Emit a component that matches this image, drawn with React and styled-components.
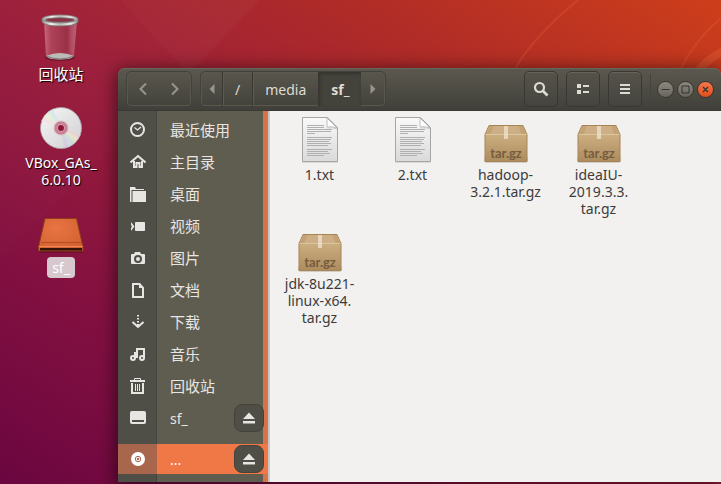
import styled, { createGlobalStyle } from "styled-components";

const GlobalStyle = createGlobalStyle`
  * {
    box-sizing: border-box;
    margin: 0;
    padding: 0;
  }

  body {
    background: #670540;
    font-family: "Noto Sans", "Noto Sans CJK SC", sans-serif;
    font-size: 14px;
    line-height: 17px;
  }

  button {
    font: inherit;
    color: inherit;
    background: none;
    border: none;
  }

  svg {
    display: block;
    flex: none;
  }
`;

const Desktop = styled.div`
  min-height: 100vh;
  display: flex;
  position: relative;
  overflow: hidden;
`;

const WallpaperSvg = styled.svg`
  position: absolute;
  inset: 0;
  width: 100%;
  height: 100%;
`;

const Shortcuts = styled.ul`
  position: relative;
  flex: none;
  width: 118px;
  padding: 14px 0 0 4px;
  list-style: none;
  display: flex;
  flex-direction: column;
  gap: 17px;
`;

const Shortcut = styled.li`
  display: flex;
  flex-direction: column;
  align-items: center;
  gap: 2px;
`;

const ShortcutLabel = styled.span`
  padding: 2px 5px;
  border-radius: 4px;
  text-align: center;
  white-space: pre-line;
  color: white;
  font-size: ${(props) => (props.$cjk ? "15px" : "14px")};
  background: ${(props) => (props.$selected ? "#d6c8cd" : "transparent")};
  text-shadow: ${(props) => (props.$selected ? "none" : "1px 1px 1px #000")};
`;

const Window = styled.main`
  position: relative;
  flex: 1;
  min-width: 0;
  margin: 68px 0 2px;
  display: flex;
  flex-direction: column;
  border-radius: 7px 7px 0 0;
  box-shadow: 0 3px 18px 2px rgba(0, 0, 0, 0.55);
`;

const HeaderBar = styled.header`
  height: 43px;
  padding: 0 7px 0 8px;
  display: flex;
  align-items: center;
  gap: 8px;
  color: #dfdbd2;
  background: linear-gradient(#5b594f, #403f3a);
  border-bottom: 1px solid #3a3934;
  border-radius: 7px 7px 0 0;
  box-shadow: inset 0 1px #68665b;
`;

const ButtonGroup = styled.nav`
  height: 36px;
  display: flex;
  border: 1px solid #42413b;
  border-radius: 5px;
  overflow: hidden;
  box-shadow: inset 0 0 0 1px #59574e;
`;

const NavButton = styled.button`
  width: 32px;
  display: grid;
  place-items: center;
  color: #98958c;
`;

const PathArrow = styled(NavButton)`
  width: ${(props) => (props.$wide ? "24px" : "21px")};
`;

const Crumb = styled.button`
  padding: 0 12px;
  border-left: 1px solid #393833;
  box-shadow: inset 1px 1px #5d5b51;
  font-size: 14px;

  &[aria-current] {
    font-weight: bold;
    background: #43423b;
    box-shadow: inset 1px 2px 3px #35342f;
  }
`;

const Tools = styled.div`
  margin-left: auto;
  display: flex;
  gap: 8px;
`;

const ToolButton = styled.button`
  width: 34px;
  height: 36px;
  display: grid;
  place-items: center;
  border: 1px solid #383731;
  border-radius: 5px;
  background: linear-gradient(#55534a, #454440);
  box-shadow: inset 0 1px #65635a;
`;

const WindowControls = styled.div`
  padding-left: 6px;
  border-left: 1px solid #44433e;
  height: 30px;
  display: flex;
  align-items: center;
  gap: 3px;
`;

const ControlButton = styled.button`
  width: 17px;
  height: 17px;
  display: grid;
  place-items: center;
  border: 1px solid #35342f;
  border-radius: 50%;
  color: #35342f;
  background: ${(props) =>
    props.$close
      ? "linear-gradient(#f4774c, #e04e1c)"
      : "linear-gradient(#8b897f, #67655d)"};
`;

const Body = styled.div`
  flex: 1;
  display: flex;
  background: #f2f1ef;
`;

const Sidebar = styled.aside`
  flex: none;
  width: 152px;
  border-right: 2px solid #cbc9c6;
  background: linear-gradient(
    to right,
    #504f47 38px,
    #45443e 38px 39px,
    #5f5d50 39px 145px,
    #d5734a 145px
  );
`;

const Places = styled.ul`
  padding: 3px 0 8px;
  list-style: none;
`;

const Place = styled.li`
  height: ${(props) => (props.$active ? "30px" : "32px")};
  margin-top: ${(props) => (props.$active ? "10px" : "0")};
  padding: 0 4px 0 12px;
  display: flex;
  align-items: center;
  justify-content: space-between;
  color: ${(props) => (props.$active ? "#fff" : "#e8e6e3")};
  background: ${(props) =>
    props.$active
      ? "linear-gradient(to right, #a8664c 39px, #f07746 39px)"
      : "none"};
`;

const PlaceLink = styled.a`
  display: flex;
  align-items: center;
  gap: 24px;
  color: inherit;
  text-decoration: none;
  font-size: ${(props) => (props.$cjk ? "15px" : "14px")};
`;

const EjectButton = styled.button`
  width: 30px;
  height: 28px;
  display: grid;
  place-items: center;
  border: 1px solid #43423b;
  border-radius: 8px;
  background: #504f47;
`;

const Files = styled.ul`
  flex: 1;
  padding: 5px 0 0 3px;
  list-style: none;
  display: grid;
  grid-template-columns: repeat(auto-fill, 93px);
  align-content: start;
  gap: 8px 0;
`;

const File = styled.li`
  display: flex;
  flex-direction: column;
  align-items: center;
  gap: 2px;
  color: #3c3c3c;
`;

const FileName = styled.span`
  text-align: center;
  white-space: pre-line;
`;

const Wallpaper = () => (
  <WallpaperSvg
    viewBox="0 0 721 484"
    preserveAspectRatio="xMidYMid slice"
    aria-hidden="true"
  >
    <defs>
      <linearGradient
        id="wall"
        gradientUnits="userSpaceOnUse"
        x1="0"
        y1="484"
        x2="427"
        y2="-187"
      >
        <stop offset="0" stopColor="#6b0640" />
        <stop offset="0.26" stopColor="#841140" />
        <stop offset="0.5" stopColor="#9b1e3b" />
        <stop offset="0.75" stopColor="#b02c27" />
        <stop offset="1" stopColor="#cd3e1a" />
      </linearGradient>
    </defs>
    <rect width="721" height="484" fill="url(#wall)" />
    <path d="M0 260L260 0H0z" fill="#fff" opacity="0.012" />
    <path d="M120 0L190 75L260 0z" fill="#fff" opacity="0.02" />
    <g fill="none" stroke="#ff8a50">
      <path d="M578 0Q535 35 514 70" strokeWidth="2" opacity="0.16" />
      <path d="M721 18Q695 40 680 70" strokeWidth="2" opacity="0.16" />
      <path d="M725 50Q705 60 694 76" strokeWidth="8" opacity="0.2" />
    </g>
  </WallpaperSvg>
);

const BinIcon = () => (
  <svg width="48" height="48" viewBox="0 0 48 48">
    <defs>
      <linearGradient id="glass">
        <stop offset="0" stopColor="#c86a80" />
        <stop offset="0.2" stopColor="#ae4359" />
        <stop offset="0.7" stopColor="#9a3045" />
        <stop offset="0.82" stopColor="#b04a60" />
        <stop offset="1" stopColor="#bb6579" />
      </linearGradient>
      <linearGradient id="rim">
        <stop offset="0" stopColor="#8e8d89" />
        <stop offset="0.25" stopColor="#f4f4f2" />
        <stop offset="0.5" stopColor="#b9b8b4" />
        <stop offset="0.8" stopColor="#eeeeec" />
        <stop offset="1" stopColor="#8e8d89" />
      </linearGradient>
    </defs>
    <ellipse cx="23" cy="43.5" rx="15" ry="3.5" fill="#400818" opacity="0.45" />
    <path d="M7 7L9 42Q23 48 37 42L40 7z" fill="url(#glass)" />
    <path d="M9 42Q23 36 37 42Q35 45.5 23 45.5T9 42z" fill="#bcbab7" />
    <path d="M9 42Q23 48 37 42" fill="none" stroke="#777" />
    <path d="M5 5v3q3 4 18 4t18-4V5z" fill="url(#rim)" stroke="#74736e" strokeWidth="0.8" />
    <ellipse cx="23" cy="5" rx="18" ry="4" fill="url(#rim)" stroke="#8d8c87" strokeWidth="0.8" />
    <ellipse cx="23" cy="6" rx="14.5" ry="2.3" fill="#883246" stroke="#777" strokeWidth="0.8" />
  </svg>
);

const DiscIcon = () => (
  <svg width="48" height="48" viewBox="0 0 48 48">
    <defs>
      <linearGradient id="disc" x1="0" y1="0" x2="1" y2="1">
        <stop offset="0" stopColor="#f6f6f6" />
        <stop offset="1" stopColor="#cfcfd2" />
      </linearGradient>
    </defs>
    <circle cx="24" cy="26" r="20.5" fill="url(#disc)" stroke="#a9a3a8" strokeWidth="0.8" />
    <g opacity="0.5">
      <path d="M24 26L4 19L8 13z" fill="#f5dde3" />
      <path d="M24 26L7 14L12 9z" fill="#e3f2c6" />
      <path d="M24 26L11 9.5L16 7z" fill="#c2e7ed" />
      <path d="M24 26L44 32L41 37z" fill="#f3cfd8" />
      <path d="M24 26L41.5 36L37 41z" fill="#f4edbb" />
      <path d="M24 26L37.5 41L32 45z" fill="#bfe5e0" />
      <path d="M24 26L32 45L27 46z" fill="#d6c3e9" />
    </g>
    <circle cx="24" cy="26" r="7" fill="#ca8093" stroke="#d8b9c2" />
    <circle cx="24" cy="26" r="3.6" fill="#8d173a" stroke="#dba5b3" />
  </svg>
);

const DriveIcon = () => (
  <svg width="48" height="48" viewBox="0 0 48 48">
    <defs>
      <radialGradient id="drive" cx="0.4" cy="0.3" r="0.8">
        <stop offset="0" stopColor="#e77442" />
        <stop offset="1" stopColor="#d2602f" />
      </radialGradient>
    </defs>
    <path d="M2 43h44v2.5H2z" fill="#3a0519" opacity="0.5" />
    <path d="M8 11.5h31.5l6.5 28.5v4h-44.500v-4z" fill="url(#drive)" stroke="#8e3d18" />
    <path d="M4 35.5h40" stroke="#b44e22" />
    <path d="M2 39.5h44" stroke="#f08a58" />
    <path d="M3 41h42v2.5h-42z" fill="#341307" />
  </svg>
);

const TextFileIcon = () => (
  <svg width="48" height="48" viewBox="0 0 48 48">
    <defs>
      <linearGradient id="paper" x1="0" y1="0" x2="0" y2="1">
        <stop offset="0" stopColor="#f9f9f9" />
        <stop offset="1" stopColor="#dadada" />
      </linearGradient>
    </defs>
    <path d="M6 46.5h36" stroke="#dad9d7" />
    <path d="M6.500 1.500h25l10 10v34h-35z" fill="url(#paper)" stroke="#a6a6a6" />
    <path d="M31 2v9q5-1 10 1z" fill="#fff" stroke="#b0b0b0" strokeWidth="0.8" />
    <path d="M31 12q5-1 10 1" fill="none" stroke="#ccc" />
    <g stroke="#b0b0b0">
      <path d="M11 9.5h17M11 11.5h17M11 13.5h25M11 15.5h24M11 17.5h8" />
      <path d="M11 21.5h25M11 23.5h24M11 25.5h22M11 27.5h24M11 29.5h21" />
      <path d="M11 33.5h25M11 35.5h21M11 37.5h23M11 39.5h17" />
    </g>
  </svg>
);

const ArchiveIcon = () => (
  <svg width="48" height="48" viewBox="0 0 48 48">
    <defs>
      <linearGradient id="box" x1="0" y1="0" x2="0" y2="1">
        <stop offset="0" stopColor="#d5b98b" />
        <stop offset="1" stopColor="#ad8c5e" />
      </linearGradient>
    </defs>
    <rect x="2" y="40" width="44" height="7" rx="3" fill="#bbb6ae" opacity="0.6" />
    <path d="M7 9.5h34l4 9v27h-42v-27z" fill="url(#box)" stroke="#a78455" />
    <path d="M7.5 10h33l4 8.5h-41z" fill="#cdae85" />
    <path d="M7.5 10l-4 8.5h5l3-8.5zM40.5 10l4 8.5h-5l-3-8.5z" fill="#ba9768" opacity="0.5" />
    <path d="M3.5 18.5h41" stroke="#dcc6a2" />
    <path d="M22 10h4v13h-4z" fill="#eee0c9" opacity="0.8" />
    <text
      x="24"
      y="42"
      textAnchor="middle"
      fontFamily="Lato, sans-serif"
      fontWeight="bold"
      fontSize="13"
      fill="#765d3d"
    >
      tar.gz
    </text>
  </svg>
);

const placeIcons = {
  recent: (
    <g fill="none" stroke="currentColor">
      <circle cx="7.5" cy="7.5" r="6.5" strokeWidth="2" />
      <path d="M4.5 5.5L7.5 8L11 5" strokeWidth="1.3" />
    </g>
  ),
  home: (
    <g fill="none" stroke="currentColor" strokeWidth="2">
      <path d="M0.5 8.5L8 2L15.5 8.5" />
      <path d="M4 7V13H6.5V9H9.5V13H12V7" />
    </g>
  ),
  folder: (
    <g fill="currentColor">
      <path d="M0 1h5l1 2h8v1H1.5v12H0z" />
      <path d="M2.5 5H16v11H2.5z" />
    </g>
  ),
  video: (
    <g fill="currentColor">
      <rect x="5" y="4" width="10" height="9" rx="0.8" />
      <path d="M1 4L4.5 8.5L1 13V10L2 8.5L1 7z" />
    </g>
  ),
  camera: (
    <g>
      <path d="M5 2h5l1 2h3q1 0 1 1v8q0 1-1 1H2q-1 0-1-1V5q0-1 1-1h2z" fill="currentColor" />
      <circle cx="8" cy="9" r="3" fill="none" stroke="#504f47" strokeWidth="2" />
    </g>
  ),
  document: (
    <g>
      <path d="M3 2H9.5L13 6V15H3z" fill="none" stroke="currentColor" strokeWidth="2" />
      <path d="M9 2L13 6H9z" fill="currentColor" />
    </g>
  ),
  download: (
    <g fill="none" stroke="currentColor" strokeWidth="2">
      <path d="M8 1v1.5M8 4v1.5M8 7v1.5M8 10v3" />
      <path d="M2.5 8L8 13L13.5 8" />
    </g>
  ),
  music: (
    <g fill="none" stroke="currentColor" strokeWidth="2">
      <circle cx="3" cy="12" r="2" />
      <circle cx="12" cy="12" r="2" />
      <path d="M5 12V7h3M7 8V3h7v9M7 7v5" />
    </g>
  ),
  trash: (
    <g fill="none" stroke="currentColor">
      <path d="M0 3h15" strokeWidth="2" />
      <path d="M4.5 2V0.5h6V2" />
      <path d="M2 5v10h11V5" strokeWidth="2" />
      <path d="M5.5 6v7M7.5 6v7M9.5 6v7" />
    </g>
  ),
  drive: (
    <g>
      <rect y="1" width="16" height="13" rx="2" fill="currentColor" />
      <path d="M2 10h12v2H2z" fill="#504f47" />
    </g>
  ),
  disc: (
    <g>
      <circle cx="8" cy="8" r="7" fill="currentColor" />
      <circle cx="8" cy="8" r="2.7" fill="none" stroke="#a8664c" />
      <circle cx="8" cy="8" r="1.2" fill="#a8664c" />
    </g>
  ),
};

const shortcuts = [
  { label: "回收站", icon: <BinIcon />, cjk: true },
  { label: "VBox_GAs_\n6.0.10", icon: <DiscIcon /> },
  { label: "sf_", icon: <DriveIcon />, selected: true },
];

const places = [
  { label: "最近使用", icon: "recent", cjk: true },
  { label: "主目录", icon: "home", cjk: true },
  { label: "桌面", icon: "folder", cjk: true },
  { label: "视频", icon: "video", cjk: true },
  { label: "图片", icon: "camera", cjk: true },
  { label: "文档", icon: "document", cjk: true },
  { label: "下载", icon: "download", cjk: true },
  { label: "音乐", icon: "music", cjk: true },
  { label: "回收站", icon: "trash", cjk: true },
  { label: "sf_", icon: "drive", eject: true },
  { label: "...", icon: "disc", eject: true, active: true },
];

const files = [
  { name: "1.txt", icon: <TextFileIcon /> },
  { name: "2.txt", icon: <TextFileIcon /> },
  { name: "hadoop-\n3.2.1.tar.gz", icon: <ArchiveIcon /> },
  { name: "ideaIU-\n2019.3.3.\ntar.gz", icon: <ArchiveIcon /> },
  { name: "jdk-8u221-\nlinux-x64.\ntar.gz", icon: <ArchiveIcon /> },
];

const Header = () => (
  <HeaderBar>
    <ButtonGroup>
      <NavButton aria-label="后退">
        <svg width="16" height="16" viewBox="0 0 16 16">
          <path d="M11 2.5L5.5 8L11 13.5" fill="none" stroke="currentColor" strokeWidth="2" />
        </svg>
      </NavButton>
      <NavButton aria-label="前进">
        <svg width="16" height="16" viewBox="0 0 16 16">
          <path d="M5 2.5L10.5 8L5 13.5" fill="none" stroke="currentColor" strokeWidth="2" />
        </svg>
      </NavButton>
    </ButtonGroup>
    <ButtonGroup>
      <PathArrow aria-label="向左">
        <svg width="6" height="10" viewBox="0 0 6 10">
          <path d="M5.5 0v10L0.5 5z" fill="currentColor" />
        </svg>
      </PathArrow>
      <Crumb>/</Crumb>
      <Crumb>media</Crumb>
      <Crumb aria-current="page">sf_</Crumb>
      <PathArrow $wide aria-label="向右">
        <svg width="6" height="10" viewBox="0 0 6 10">
          <path d="M0.5 0v10L5.5 5z" fill="currentColor" />
        </svg>
      </PathArrow>
    </ButtonGroup>
    <Tools>
      <ToolButton aria-label="搜索">
        <svg width="16" height="16" viewBox="0 0 16 16">
          <g fill="none" stroke="currentColor">
            <circle cx="6.5" cy="6.5" r="4.5" strokeWidth="2.2" />
            <path d="M9.5 9.5L14.5 14.5" strokeWidth="2.6" />
          </g>
        </svg>
      </ToolButton>
      <ToolButton aria-label="列表视图">
        <svg width="12" height="10" viewBox="0 0 12 10">
          <path d="M0 0h4v4H0zM0 6h4v4H0zM6 1h6v2H6zM6 7h6v2H6z" fill="currentColor" />
        </svg>
      </ToolButton>
      <ToolButton aria-label="菜单">
        <svg width="10" height="10" viewBox="0 0 10 10">
          <path d="M0 0h10v2H0zM0 4h10v2H0zM0 8h10v2H0z" fill="currentColor" />
        </svg>
      </ToolButton>
    </Tools>
    <WindowControls>
      <ControlButton aria-label="最小化">
        <svg width="9" height="9" viewBox="0 0 9 9">
          <path d="M0.5 4.5h8" stroke="currentColor" />
        </svg>
      </ControlButton>
      <ControlButton aria-label="最大化">
        <svg width="9" height="9" viewBox="0 0 9 9">
          <path d="M1 1h7v7H1z" fill="none" stroke="currentColor" />
        </svg>
      </ControlButton>
      <ControlButton $close aria-label="关闭">
        <svg width="9" height="9" viewBox="0 0 9 9">
          <path d="M2 2l5 5M7 2l-5 5" stroke="currentColor" strokeWidth="1.3" />
        </svg>
      </ControlButton>
    </WindowControls>
  </HeaderBar>
);

const App = () => {
  return (
    <>
      <GlobalStyle />
      <Desktop>
        <Wallpaper />
        <Shortcuts>
          {shortcuts.map((item) => (
            <Shortcut key={item.label}>
              {item.icon}
              <ShortcutLabel $cjk={item.cjk} $selected={item.selected}>
                {item.label}
              </ShortcutLabel>
            </Shortcut>
          ))}
        </Shortcuts>
        <Window>
          <Header />
          <Body>
            <Sidebar>
              <Places>
                {places.map((place) => (
                  <Place key={place.icon} $active={place.active}>
                    <PlaceLink href="#" $cjk={place.cjk}>
                      <svg width="16" height="16" viewBox="0 0 16 16">
                        {placeIcons[place.icon]}
                      </svg>
                      {place.label}
                    </PlaceLink>
                    {place.eject && (
                      <EjectButton aria-label="弹出">
                        <svg width="14" height="12" viewBox="0 0 14 12">
                          <path d="M7 0.5L13 7H1zM1 9h12v2.5H1z" fill="#e8e6e3" />
                        </svg>
                      </EjectButton>
                    )}
                  </Place>
                ))}
              </Places>
            </Sidebar>
            <Files>
              {files.map((file) => (
                <File key={file.name}>
                  {file.icon}
                  <FileName>{file.name}</FileName>
                </File>
              ))}
            </Files>
          </Body>
        </Window>
      </Desktop>
    </>
  );
};

export default App;
